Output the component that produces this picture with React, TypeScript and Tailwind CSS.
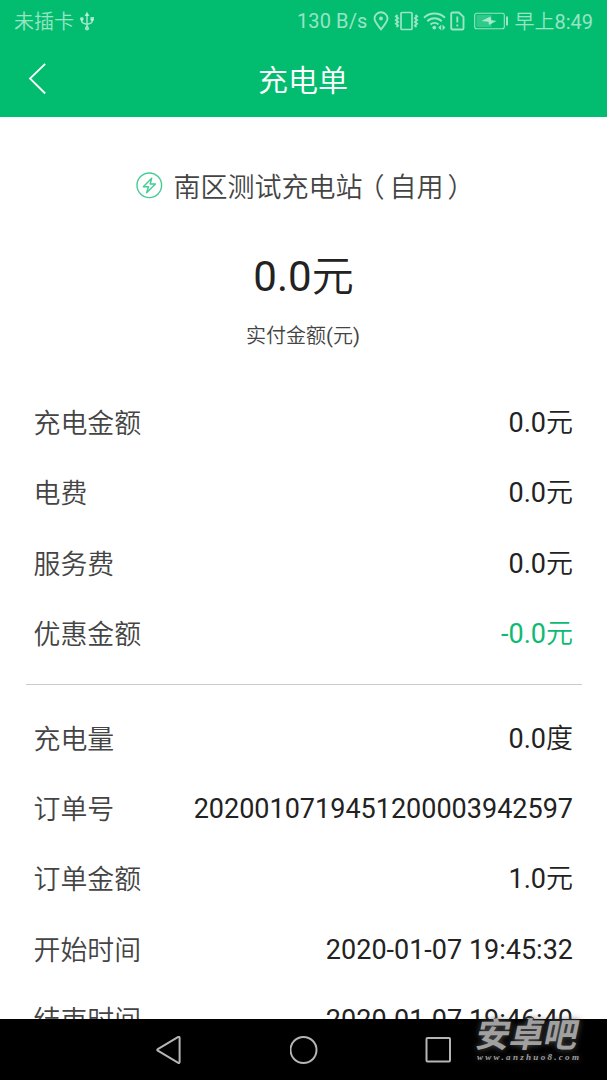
import type { ReactNode } from 'react';

function StatusBar() {
  return (
    <div className="flex h-[42px] items-center justify-between pr-[14px] pl-[14px] text-[20px] leading-[42px] text-white/60">
      <div className="flex items-center">
        <span className="pt-px">未插卡</span>
        <svg className="ml-[5px] h-[20px] w-[16px]" viewBox="0 0 16 20" fill="none" stroke="currentColor" strokeWidth="1.6">
          <path d="M8 3v13M2.8 8v2.2c0 2 1.8 2.3 5.2 3M13.2 8v2.2c0 2-1.8 2.3-5.2 3" />
          <path d="M8 .4 10.500 5h-5z" fill="currentColor" stroke="none" />
          <circle cx="8" cy="17.400" r="2.100" fill="currentColor" stroke="none" />
          <circle cx="2.800" cy="7.800" r="1.900" fill="currentColor" stroke="none" />
          <path d="M11.400 6h3.600v3.600h-3.600z" fill="currentColor" stroke="none" />
        </svg>
      </div>
      <div className="flex items-center">
        <span className="tracking-[0.100px]">130 B/s</span>
        <svg className="ml-[6px] h-[20px] w-[16px] shrink-0" viewBox="0 0 16 20" fill="none" stroke="currentColor" strokeWidth="1.9">
          <path d="M8 18.300C5.200 14.800 1.500 11 1.500 7.600a6.500 6.300 0 0 1 13 0c0 3.400-3.700 7.200-6.500 10.700z" />
          <circle cx="8" cy="7.500" r="2" fill="currentColor" stroke="none" />
        </svg>
        <svg className="ml-[5px] h-[20px] w-[25px] shrink-0" viewBox="0 0 25 20" fill="none" stroke="currentColor" strokeWidth="1.700">
          <rect x="7" y="1.500" width="11" height="17" rx="1" />
          <path d="M3.500 4 2 5.500l2 1.800-2 1.800 2 1.800-2 1.800 2 1.800-1.500 1.500M21.500 4l1.500 1.500-2 1.800 2 1.800-2 1.800 2 1.800-2 1.800 1.500 1.500" strokeWidth="2" />
        </svg>
        <svg className="ml-[4px] h-[20px] w-[23px] shrink-0" viewBox="0 0 23 20" fill="none" stroke="currentColor" strokeWidth="1.900">
          <path d="M1 6.700c5.800-5.600 15.200-5.600 21 0M4.300 10.200c4-3.900 10.400-3.900 14.400 0M7.500 13.500c2.200-2.200 5.800-2.200 8 0" />
          <circle cx="11.300" cy="16.600" r="1.900" fill="currentColor" stroke="none" />
          <path d="m18.200 13.500-3 3 3 3zM19.500 13.500l3 3-3 3z" fill="currentColor" stroke="none" />
        </svg>
        <svg className="ml-[4px] h-[20px] w-[15px] shrink-0" viewBox="0 0 15 20" fill="none" stroke="currentColor" strokeWidth="1.900">
          <path d="M2.500 1.500h6.300l4.700 4.400v11.300c0 .8-.5 1.300-1.300 1.300H2.500c-.8 0-1.300-.5-1.300-1.300V2.800c0-.8.500-1.300 1.300-1.300zM7.300 5.500v6M7.300 13.500v2.100" />
        </svg>
        <svg className="ml-[9px] h-[20px] w-[35px] shrink-0" viewBox="0 0 35 20">
          <rect x=".7" y="2.200" width="29.600" height="15.600" rx="2" fill="none" stroke="currentColor" strokeWidth="1.100" />
          <path d="M2.500 4h15v12h-15z" fill="currentColor" opacity=".3" />
          <path d="m16.500 5.500-9 4.500 7 .7.500 3.300 7.500-4-5.300-.9z" fill="currentColor" />
          <path d="M32 5.500h2v9h-2z" fill="currentColor" />
        </svg>
        <span className="ml-[5px] pt-px">早上8:49</span>
      </div>
    </div>
  );
}

function Row({ label, children, accent = false }: { label: string; children: ReactNode; accent?: boolean }) {
  return (
    <div className="flex h-[70.3px] shrink-0 items-center justify-between pr-[34px] pl-[33.500px] leading-[40px]">
      <span className="pt-[3px] text-[26.900px] text-[#444444]">{label}</span>
      <span className={accent ? 'pt-px text-[27px] text-[#0dba72]' : 'pt-px text-[27px] text-[#222222]'}>{children}</span>
    </div>
  );
}

function NavigationBar() {
  return (
    <nav className="relative h-[61px] shrink-0 bg-black">
      <div className="flex h-full items-center justify-center gap-[107px] text-[#b5b5b5]">
        <svg className="h-[28px] w-[28px]" viewBox="0 0 28 28" fill="none" stroke="currentColor" strokeWidth="2" strokeLinejoin="round">
          <path d="M2.800 13.200 23.300.9c.7-.4 1.300 0 1.300.8v24.400c0 .8-.6 1.200-1.300.8L2.800 14.600c-.7-.4-.7-1 0-1.400z" />
        </svg>
        <svg className="h-[28px] w-[28px]" viewBox="0 0 28 28" fill="none" stroke="currentColor" strokeWidth="2">
          <circle cx="13.500" cy="14" r="13" />
        </svg>
        <svg className="h-[28px] w-[28px]" viewBox="0 0 28 28" fill="none" stroke="currentColor" strokeWidth="2">
          <rect x="1.500" y="2" width="23.500" height="23.500" rx="1" />
        </svg>
      </div>
      <div className="absolute -top-[5px] left-[475px] w-[106px] text-center text-[#a0a0a0] [text-shadow:0_0_6px_#555555]">
        <div className="-skew-x-12 font-['Noto_Sans_CJK_SC',sans-serif] text-[34px] leading-[38px] font-bold whitespace-nowrap">安卓吧</div>
        <div className="pl-[2px] text-left font-['Liberation_Serif',serif] text-[9px] leading-[10px] font-bold tracking-[2.300px] whitespace-nowrap italic">www.anzhuo8.com</div>
      </div>
    </nav>
  );
}

export default function App() {
  return (
    <div className="flex h-[1080px] w-[607px] flex-col overflow-hidden bg-white font-['Roboto','Noto_Sans_CJK_SC_DemiLight','Noto_Sans_CJK_SC',sans-serif]">
      <header className="h-[116.500px] shrink-0 bg-[#02bd70]">
        <StatusBar />
        <div className="flex h-[74px] items-center pl-[28px] text-white">
          <svg className="h-[32px] w-[20px]" viewBox="0 0 20 32" fill="none" stroke="currentColor" strokeWidth="1.800">
            <path d="M17.200 .8 2 15.500l15.200 15" />
          </svg>
          <h1 className="mr-[49px] flex-1 pt-[4px] text-center text-[30px] leading-[44px] font-normal">充电单</h1>
        </div>
      </header>
      <main className="flex min-h-0 flex-1 flex-col overflow-hidden">
        <div className="mt-[49px] flex h-[40px] shrink-0 items-center pl-[136px]">
          <svg className="h-[27px] w-[27px] shrink-0" viewBox="0 0 27 27" fill="none" stroke="#43cc96" strokeWidth="1.400" strokeLinejoin="round">
            <circle cx="13.300" cy="13.300" r="12.300" />
            <path d="m15.700 6.200-8.400 8.600h5.200l-1.900 6 8.800-8.800h-5.200z" />
          </svg>
          <span className="ml-[10.500px] pt-[5px] text-[27px] leading-[40px] whitespace-nowrap text-[#444444]">
            南区测试充电站<span className="-ml-[5px] mr-[5px]">（</span>自用<span className="ml-[4px]">）</span>
          </span>
        </div>
        <div className="mt-[41px] h-[60px] shrink-0 text-center text-[42px] leading-[60px] text-[#222222]">0.0元</div>
        <div className="mt-[14px] mr-px h-[30px] shrink-0 text-center text-[20px] leading-[30px] text-[#444444]">实付金额(元)</div>
        <section className="mt-[37px] shrink-0">
          <Row label="充电金额">0.0元</Row>
          <Row label="电费">0.0元</Row>
          <Row label="服务费">0.0元</Row>
          <Row label="优惠金额" accent>-0.0元</Row>
        </section>
        <div className="mt-[15px] mr-[25px] ml-[26px] h-px shrink-0 bg-[#cccccc]" />
        <section className="mt-[18.500px] shrink-0">
          <Row label="充电量">0.0度</Row>
          <Row label="订单号">2020010719451200003942597</Row>
          <Row label="订单金额">1.0元</Row>
          <Row label="开始时间">2020-01-07 19:45:32</Row>
          <Row label="结束时间">2020-01-07 19:46:40</Row>
        </section>
      </main>
      <NavigationBar />
    </div>
  );
}
